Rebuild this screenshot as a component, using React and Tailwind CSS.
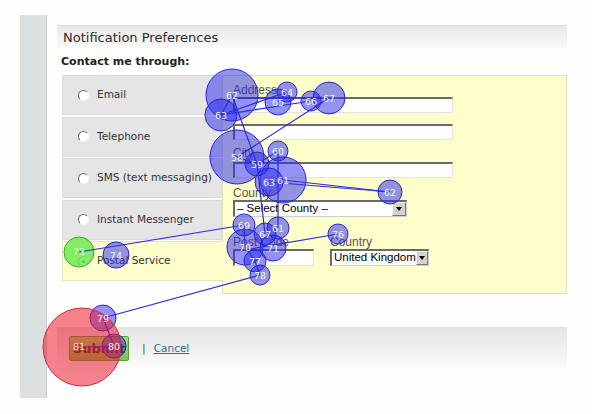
import React from "react";

// gaze plot: [cx, cy, r, label]
const blueDots = [
  [232, 95, 26, "62"],
  [221, 115, 16, "63"],
  [287, 92, 10, "64"],
  [278, 102, 13, "65"],
  [311, 101, 10, "66"],
  [329, 98, 16, "67"],
  [237, 157, 27, "58"],
  [257, 164, 12, "59"],
  [278, 151, 10, "60"],
  [283, 180, 23, "61"],
  [269, 182, 14, "63"],
  [390, 192, 12, "62"],
  [244, 225, 11, "69"],
  [278, 228, 11, "61"],
  [265, 234, 11, "67"],
  [245, 247, 18, "70"],
  [273, 248, 13, "71"],
  [255, 261, 11, "77"],
  [260, 275, 10, "78"],
  [338, 234, 10, "76"],
  [116, 255, 13, "74"],
  [103, 318, 13, "79"],
  [114, 346, 12, "80"],
];

const lines = [
  [232, 95, 221, 115],
  [221, 115, 287, 92],
  [287, 92, 278, 102],
  [232, 98, 329, 98],
  [221, 115, 311, 101],
  [329, 98, 237, 157],
  [232, 95, 257, 164],
  [237, 157, 257, 164],
  [257, 164, 278, 151],
  [278, 151, 278, 228],
  [257, 164, 265, 234],
  [283, 180, 390, 192],
  [390, 192, 269, 182],
  [79, 252, 244, 225],
  [244, 225, 245, 247],
  [245, 247, 255, 261],
  [338, 234, 245, 250],
  [255, 261, 260, 275],
  [260, 275, 103, 318],
  [103, 318, 114, 346],
  [114, 346, 82, 347],
];

function GazePlot() {
  return (
    <svg className="absolute left-0 top-0 z-20 pointer-events-none" width="592" height="414" viewBox="0 0 592 414">
      {blueDots.map(([cx, cy, r], i) => (
        <circle key={"b" + i} cx={cx} cy={cy} r={r} fill="rgba(40,40,235,0.5)" stroke="#2424d8" strokeWidth="1" />
      ))}
      <circle cx="79" cy="252" r="15" fill="rgba(110,235,80,0.85)" stroke="#3fa82a" strokeWidth="1" />
      {lines.map(([x1, y1, x2, y2], i) => (
        <line key={"l" + i} x1={x1} y1={y1} x2={x2} y2={y2} stroke="#2a2ae0" strokeWidth="1.2" />
      ))}
      <circle cx="82" cy="347" r="39" fill="rgba(235,25,45,0.55)" stroke="#d0283c" strokeWidth="1" />
      {blueDots.map(([cx, cy, r, t], i) => (
        <text key={"t" + i} x={cx} y={cy + 3.5} textAnchor="middle" fontSize="9.5" fontFamily="DejaVu Sans, sans-serif" fill="#f4f4ff">
          {t}
        </text>
      ))}
      <text x="79" y="255" textAnchor="middle" fontSize="9" fontFamily="DejaVu Sans, sans-serif" fill="#e4ffdc">73</text>
      <text x="79" y="350" textAnchor="middle" fontSize="9.5" fontFamily="DejaVu Sans, sans-serif" fill="#ffe0e4">81</text>
    </svg>
  );
}

function Radio({ checked }) {
  return (
    <span className="w-[11px] h-[11px] rounded-full bg-white border border-t-[#6b6b6b] border-l-[#6b6b6b] border-b-[#f2f2f2] border-r-[#f2f2f2] flex items-center justify-center shrink-0">
      {checked && <span className="w-[3px] h-[3px] rounded-full bg-black" />}
    </span>
  );
}

function Option({ label, checked }) {
  if (checked) {
    return (
      <div className="h-[40px] w-[161px] -mr-px relative z-10 flex items-center pl-[15px] bg-[#fefecb] border border-r-0 border-[#e2e1c2]">
        <Radio checked />
        <span className="ml-[8px] text-[10.5px] text-[#333]">{label}</span>
      </div>
    );
  }
  return (
    <div className="h-[40px] w-[160px] flex items-center pl-[15px] bg-[#e5e5e5] border border-[#dadada]">
      <Radio />
      <span className="ml-[8px] text-[10.5px] text-[#333]">{label}</span>
    </div>
  );
}

function TextBox({ w }) {
  return <div className={`${w} h-[16px] bg-white border-t-2 border-l-2 border-[#6a6a6a] border-b border-r border-b-[#e2e2e2] border-r-[#e2e2e2]`} />;
}

function Select({ w, text }) {
  return (
    <div className={`${w} h-[17px] bg-white border-t-2 border-l-2 border-[#6a6a6a] border-b border-r border-b-[#d0d0d0] border-r-[#d0d0d0] flex items-center justify-between`}>
      <span className="pl-[2px] text-[11.5px] leading-none text-black font-['Liberation_Sans',Arial,sans-serif] whitespace-nowrap">{text}</span>
      <span className="w-[14px] h-[14px] bg-[#d6d3cc] border border-t-[#f4f4f4] border-l-[#f4f4f4] border-b-[#777] border-r-[#777] flex items-center justify-center">
        <span className="w-0 h-0 border-l-[3.5px] border-r-[3.5px] border-t-[4px] border-l-transparent border-r-transparent border-t-black" />
      </span>
    </div>
  );
}

export default function App() {
  return (
    <div className="relative w-[592px] h-[414px] overflow-hidden bg-[#fefefc] font-['DejaVu_Sans',Verdana,sans-serif]">
      <div className="flex pt-[15px] pl-[20px]">
        {/* left strip */}
        <div className="w-[27px] h-[383px] bg-[#dde0e1] border-r border-[#c7cbcc]" />

        <div className="pl-[10px] pt-[10px] w-[520px]">
          {/* header */}
          <div className="h-[23px] w-[510px] border-t border-[#dadada] bg-gradient-to-b from-[#e8e8e8] to-[#fafaf8] pl-[6px] text-[13px] leading-[23px] text-[#2b2b2b]">
            Notification Preferences
          </div>

          <div className="mt-[7px] pl-[4px] text-[11px] leading-[14px] font-bold text-[#222]">Contact me through:</div>

          <div className="mt-[6px] flex">
            <div className="ml-[5px] flex flex-col gap-[1.5px]">
              <Option label="Email" />
              <Option label="Telephone" />
              <Option label="SMS (text messaging)" />
              <Option label="Instant Messenger" />
              <Option label="Postal Service" checked />
            </div>

            <div className="w-[345px] h-[219px] bg-[#fefecb] border border-[#e0dfbd] pl-[10px] pt-[7px] font-['Liberation_Sans',Arial,sans-serif] text-[12px] text-[#555]">
              <div className="leading-[14px]">Address</div>
              <TextBox w="w-[220px]" />
              <div className="mt-[11px]">
                <TextBox w="w-[220px]" />
              </div>
              <div className="mt-[6px] leading-[14px]">City</div>
              <div className="mt-[2px]">
                <TextBox w="w-[220px]" />
              </div>
              <div className="mt-[8px] leading-[14px]">County</div>
              <Select w="w-[174px]" text="– Select County –" />
              <div className="mt-[18px] flex">
                <div className="w-[81px]">
                  <div className="leading-[14px]">Post Code</div>
                  <div className="w-[81px] h-[17px] bg-white border-t-2 border-l-2 border-[#6a6a6a] border-b border-r border-b-[#e2e2e2] border-r-[#e2e2e2]" />
                </div>
                <div className="ml-[16px]">
                  <div className="leading-[14px]">Country</div>
                  <Select w="w-[99px]" text="United Kingdom" />
                </div>
              </div>
            </div>
          </div>

          {/* button bar */}
          <div className="mt-[33px] h-[45px] w-[510px] bg-gradient-to-b from-[#e4e4e4] to-[#fdfdfb] pt-[9px] pl-[12px] flex items-start">
            <button className="w-[60px] h-[25px] rounded-[2px] border border-[#5a9a38] bg-gradient-to-b from-[#a4de6c] to-[#78c63e] text-[13px] font-bold text-[#3a2a10]">
              Submit
            </button>
            <span className="ml-[13px] mt-[5px] text-[11px] text-[#555]">|</span>
            <a href="#" className="ml-[8px] mt-[5px] text-[10.5px] text-[#2f6a94] underline">Cancel</a>
          </div>
        </div>
      </div>

      <GazePlot />
    </div>
  );
}
